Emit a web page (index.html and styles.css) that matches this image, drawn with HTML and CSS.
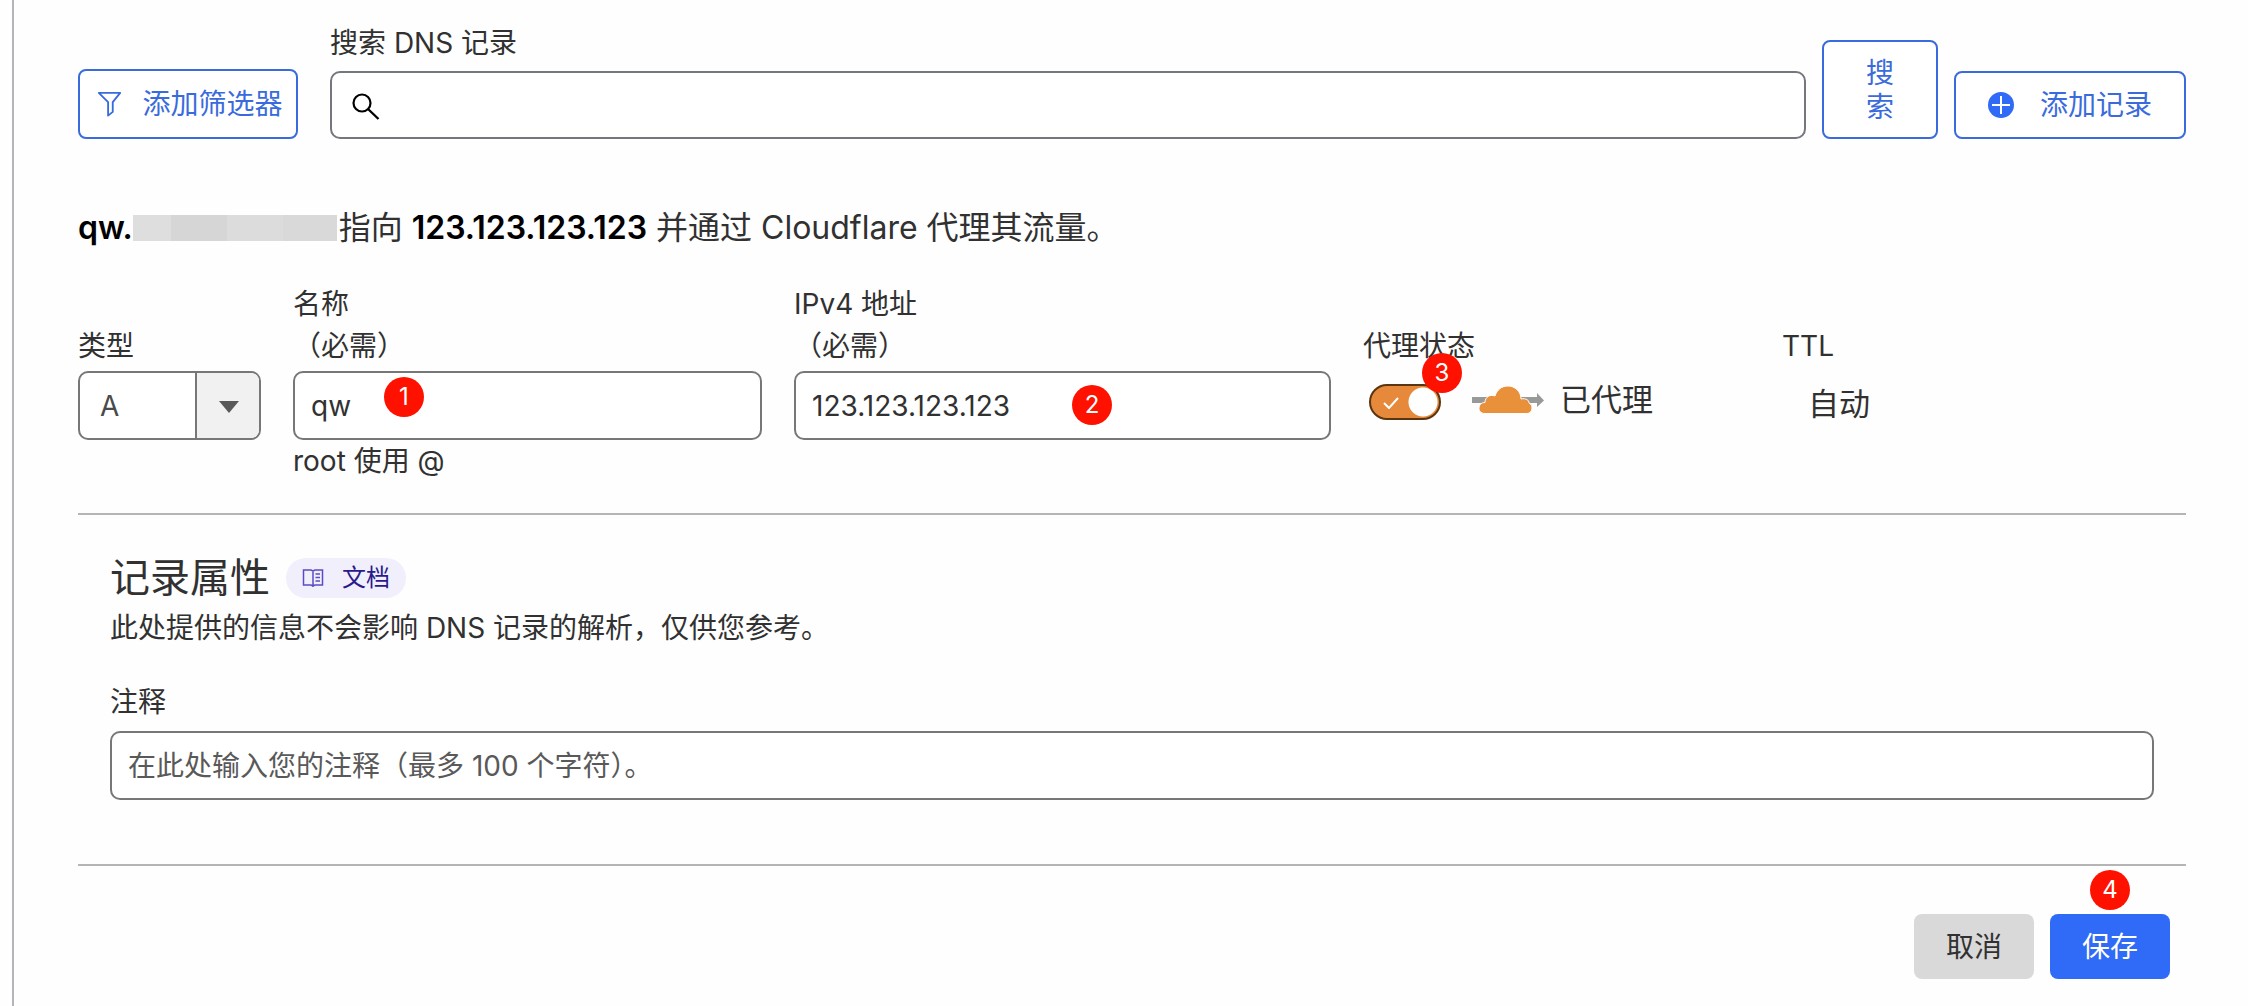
FILE: index.html
```html
<!DOCTYPE html>
<html lang="zh-CN">
<head>
    <meta charset="UTF-8">
    <meta name="viewport" content="width=device-width, initial-scale=1.0">
    <title>DNS 记录</title>
    <link rel="stylesheet" href="styles.css">
</head>
<body>
    <main class="panel">
        <form class="search-bar">
            <button type="button" class="btn btn-outline btn-filter">
                <svg class="icon-filter" viewBox="0 0 26 28" aria-hidden="true">
                    <path d="M1.5 2h23l-8 10v10.500l-5 4v-14.500z" fill="none" stroke="currentColor" stroke-width="2" stroke-linejoin="round"/>
                </svg>
                <span>添加筛选器</span>
            </button>
            <div class="search-field">
                <label for="search">搜索 DNS 记录</label>
                <div class="search-box">
                    <svg class="icon-search" viewBox="0 0 28 28" aria-hidden="true">
                        <circle cx="10" cy="10" r="8.500" fill="none" stroke="#000" stroke-width="2.200"/>
                        <path d="M16 16l10.500 10" stroke="#000" stroke-width="2.400"/>
                    </svg>
                    <input type="text" id="search">
                </div>
            </div>
            <button type="submit" class="btn btn-outline btn-search">搜<br>索</button>
            <button type="button" class="btn btn-outline btn-add">
                <svg class="icon-plus" viewBox="0 0 26 26" aria-hidden="true">
                    <circle cx="13" cy="13" r="13" fill="#2f6bf6"/>
                    <path d="M13 4v18M4 13h18" stroke="#fff" stroke-width="2"/>
                </svg>
                <span>添加记录</span>
            </button>
        </form>

        <form class="record">
            <p class="summary"><strong>qw.</strong><span class="mask"></span><span>指向 <strong>123.123.123.123</strong> 并通过 Cloudflare 代理其流量。</span></p>

            <div class="fields">
                <div class="field field-type">
                    <label for="type">类型</label>
                    <div class="select-box">
                        <select id="type">
                            <option>A</option>
                            <option>AAAA</option>
                            <option>CNAME</option>
                        </select>
                        <span class="select-arrow"></span>
                    </div>
                </div>
                <div class="field field-name">
                    <label for="name">名称<br>（必需）</label>
                    <input type="text" id="name" class="input" value="qw">
                    <span class="step step-1">1</span>
                    <small>root 使用 @</small>
                </div>
                <div class="field field-address">
                    <label for="address">IPv4 地址<br>（必需）</label>
                    <input type="text" id="address" class="input" value="123.123.123.123">
                    <span class="step step-2">2</span>
                </div>
                <div class="field field-proxy">
                    <label for="proxy">代理状态</label>
                    <div class="proxy">
                        <span class="toggle">
                            <input type="checkbox" id="proxy" checked>
                            <svg class="icon-check" viewBox="0 0 16 12" aria-hidden="true">
                                <path d="M1 6l5 5 9-10" fill="none" stroke="#fff" stroke-width="2"/>
                            </svg>
                            <span class="step step-3">3</span>
                        </span>
                        <svg class="icon-cloud" viewBox="0 0 72 28" aria-hidden="true">
                            <path d="M0 11h65V7l7 7.500-7 6.500v-4H0z" fill="#999"/>
                            <path d="M13 27.500c-4 0-6-2.500-6-5 0-4 2.500-6 6-6 0-5.500 5-8.500 10-6.500C25 3.500 30 0 36 0c7 0 13 5.500 13 13 5-1 8 1 8 4 2.500 1 3 3.500 3 5 0 3-2 5.500-5 5.500z" fill="#e8903a" stroke="#fff" stroke-width="1"/>
                        </svg>
                        <span>已代理</span>
                    </div>
                </div>
                <div class="field field-ttl">
                    <span class="label">TTL</span>
                    <span class="ttl">自动</span>
                </div>
            </div>

            <section class="attributes">
                <div class="heading">
                    <h2>记录属性</h2>
                    <a href="#" class="docs">
                        <svg class="icon-book" viewBox="0 0 22 20" aria-hidden="true">
                            <path d="M11 18l-2-1H1.500V2H9l2 1 2-1h7.500v15H13zM11 3v16M13.500 6h4.500M13.500 9.500h4.500M13.500 13h4.500" fill="none" stroke="currentColor" stroke-width="1.500"/>
                        </svg>
                        <span>文档</span>
                    </a>
                </div>
                <p>此处提供的信息不会影响 DNS 记录的解析，仅供您参考。</p>
                <div class="field">
                    <label for="comment">注释</label>
                    <input type="text" id="comment" class="input" placeholder="在此处输入您的注释（最多 100 个字符）。">
                </div>
            </section>

            <div class="actions">
                <button type="button" class="btn btn-cancel">取消</button>
                <button type="submit" class="btn btn-save">保存<span class="step step-4">4</span></button>
            </div>
        </form>
    </main>
</body>
</html>
```

FILE: styles.css
```css
* {
    box-sizing: border-box;
}
body {
    margin: 0;
    background: #fefefe;
    color: #313131;
    font-family: Inter, "Noto Sans CJK SC", sans-serif;
    font-size: 28px;
    line-height: 42px;
}
button, input, select {
    font: inherit;
    color: inherit;
}
.panel {
    margin-left: 12px;
    padding: 22px 62px 27px 64px;
    min-height: 100vh;
    border-left: 2px solid #b3b5b8;
}

/* search bar */
.search-bar {
    display: flex;
    align-items: flex-end;
    gap: 16px;
}
.btn {
    position: relative;
    display: flex;
    align-items: center;
    justify-content: center;
    border: none;
    border-radius: 8px;
    padding: 0;
    line-height: 34px;
    cursor: pointer;
    white-space: nowrap;
}
.btn-outline {
    height: 68px;
    border: 2px solid #3a6bdc;
    background: #fff;
    color: #3a6bdc;
}
.btn-filter {
    width: 220px;
    height: 70px;
    gap: 20px;
    margin-right: 16px;
    padding-left: 4px;
}
.btn-search {
    width: 116px;
    height: 99px;
}
.btn-add {
    width: 232px;
    gap: 26px;
}
.icon-filter {
    width: 25px;
    height: 26px;
}
.icon-plus {
    width: 26px;
    height: 26px;
}
.search-field {
    flex: 1;
}
.search-field label {
    display: block;
    margin-bottom: 7px;
}
.search-box {
    display: flex;
    align-items: center;
    height: 68px;
    padding: 4px 20px 0;
    border: 2px solid #74777d;
    border-radius: 10px;
    background: #fff;
}
.search-box input {
    flex: 1;
    margin-left: 12px;
    border: none;
    outline: none;
    background: none;
}
.icon-search {
    width: 28px;
    height: 28px;
}

/* record form */
.summary {
    display: flex;
    align-items: center;
    margin: 66px 0 32px;
    font-size: 32px;
    line-height: 46px;
}
.summary strong {
    color: #000;
    font-weight: 600;
}
.mask {
    width: 204px;
    height: 26px;
    margin-right: 2px;
    background: linear-gradient(90deg, #dedede 38px, #d6d6d6 38px, #d6d6d6 94px, #dcdcdc 94px, #dcdcdc 150px, #d9d9d9 150px);
}
.fields {
    display: grid;
    grid-template-columns: 183px 469fr 537fr 387px 404px;
    column-gap: 32px;
    align-items: start;
    height: 232px;
    border-bottom: 2px solid #b5b5b5;
}
.field {
    position: relative;
    display: flex;
    flex-direction: column;
}
.field label, .label {
    margin-bottom: 4px;
}
.field-type, .field-proxy, .field-ttl {
    padding-top: 42px;
}
.input, .select-box {
    width: 100%;
    height: 69px;
    border: 2px solid #777;
    border-radius: 10px;
    background: #fff;
}
.input {
    padding: 0 16px;
}
.input::placeholder {
    color: #595959;
    opacity: 1;
}
.select-box {
    position: relative;
    overflow: hidden;
}
.select-box select {
    width: 100%;
    height: 100%;
    padding: 0 20px;
    border: none;
    appearance: none;
    background: none;
    color: #4a4a4a;
}
.select-arrow {
    position: absolute;
    top: 0;
    right: 0;
    bottom: 0;
    width: 64px;
    border-left: 2px solid #777;
    background: #f1f1f1;
    pointer-events: none;
}
.select-arrow::after {
    content: "";
    position: absolute;
    top: 28px;
    left: 22px;
    border: 10px solid transparent;
    border-top: 12px solid #595959;
    border-bottom: none;
}
.field small {
    font-size: 28px;
}
.proxy {
    display: flex;
    align-items: center;
    padding: 8px 0 0 6px;
    font-size: 31px;
}
.toggle {
    position: relative;
    display: flex;
    margin: 4px 31px 0 0;
}
.toggle input {
    width: 72px;
    height: 36px;
    margin: 0;
    border: 2px solid #5b3410;
    border-radius: 18px;
    appearance: none;
    background: radial-gradient(circle at 52px 16px, #fff 14px, #e6893a 15px);
}
.icon-check {
    position: absolute;
    top: 13px;
    left: 14px;
    width: 16px;
    height: 12px;
}
.icon-cloud {
    width: 72px;
    height: 28px;
    margin-right: 16px;
}
.ttl {
    padding: 12px 0 0 26px;
    font-size: 31px;
}

/* numbered steps */
.step {
    position: absolute;
    width: 40px;
    height: 40px;
    border-radius: 50%;
    background: #ff1100;
    color: #fff;
    font-size: 24px;
    line-height: 40px;
    text-align: center;
}
.step-1 {
    top: 94px;
    left: 91px;
}
.step-2 {
    top: 102px;
    left: 278px;
}
.step-3 {
    top: -31px;
    right: -21px;
}
.step-4 {
    top: -44px;
    left: 40px;
}

/* record attributes */
.attributes {
    padding: 34px 32px 64px;
    border-bottom: 2px solid #b5b5b5;
}
.attributes label {
    margin-bottom: 8px;
}
.heading {
    display: flex;
    align-items: center;
    gap: 16px;
}
.heading h2 {
    margin: 0;
    font-size: 40px;
    font-weight: 400;
    line-height: 58px;
}
.docs {
    display: flex;
    align-items: center;
    gap: 18px;
    height: 40px;
    padding: 0 16px;
    border-radius: 20px;
    background: #f1effb;
    color: #2a1a8c;
    font-size: 24px;
    text-decoration: none;
}
.icon-book {
    width: 22px;
    height: 20px;
    color: #5a4cc4;
}
.attributes p {
    margin: 0 0 32px;
}
.actions {
    display: flex;
    justify-content: flex-end;
    gap: 16px;
    padding: 48px 16px 0;
}
.btn-cancel, .btn-save {
    width: 120px;
    height: 65px;
}
.btn-cancel {
    background: #d9d9d9;
}
.btn-save {
    background: #2f6bf6;
    color: #fff;
}
```
